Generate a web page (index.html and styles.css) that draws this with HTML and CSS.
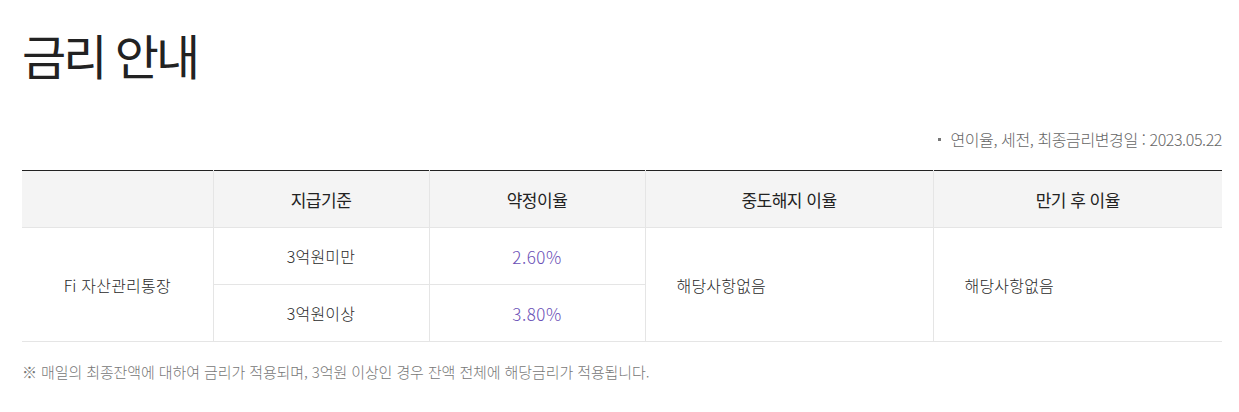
FILE: index.html
```html
<!DOCTYPE html>
<html lang="ko">
<head>
<meta charset="utf-8">
<title>금리 안내</title>
<link rel="stylesheet" href="styles.css">
</head>
<body>
<div class="wrap">
  <h1 class="title">금리 안내</h1>
  <p class="info"><span class="dot"></span>연이율, 세전, 최종금리변경일 : 2023.05.22</p>
  <table class="rate">
    <colgroup>
      <col class="c1"><col class="c2"><col class="c3"><col class="c4"><col class="c5">
    </colgroup>
    <thead>
      <tr>
        <th></th>
        <th>지급기준</th>
        <th>약정이율</th>
        <th>중도해지 이율</th>
        <th>만기 후 이율</th>
      </tr>
    </thead>
    <tbody>
      <tr>
        <td rowspan="2">Fi 자산관리통장</td>
        <td>3억원미만</td>
        <td class="pct">2.60%</td>
        <td rowspan="2" class="left">해당사항없음</td>
        <td rowspan="2" class="left">해당사항없음</td>
      </tr>
      <tr>
        <td>3억원이상</td>
        <td class="pct">3.80%</td>
      </tr>
    </tbody>
  </table>
  <p class="note">※ 매일의 최종잔액에 대하여 금리가 적용되며, 3억원 이상인 경우 잔액 전체에 해당금리가 적용됩니다.</p>
</div>
</body>
</html>
```

FILE: styles.css
```css
html, body {
  margin: 0;
  padding: 0;
  background: #fff;
}
body {
  font-family: "Noto Sans CJK KR", "Noto Sans", sans-serif;
  color: #333;
}
.wrap {
  width: 1200px;
  padding: 0 0 0 22px;
}
.title {
  margin: 0;
  padding-top: 19px;
  font-size: 48px;
  font-weight: 400;
  line-height: 70px;
  letter-spacing: -3px;
  color: #222;
}
.info {
  margin: 40px 0 0;
  text-align: right;
  font-size: 16px;
  font-weight: 300;
  line-height: 20px;
  letter-spacing: -0.4px;
  color: #666;
}
.dot {
  display: inline-block;
  width: 3px;
  height: 3px;
  background: #777;
  vertical-align: middle;
  margin-right: 9px;
  position: relative;
  top: -2px;
}
.rate {
  margin-top: 21px;
  width: 1200px;
  border-collapse: collapse;
  table-layout: fixed;
  border-top: 1px solid #222;
}
.c1 { width: 191px; }
.c2 { width: 216px; }
.c3 { width: 216px; }
.c4 { width: 288px; }
.c5 { width: 289px; }
.rate th, .rate td {
  border: 1px solid #e5e5e5;
  text-align: center;
  font-size: 16px;
  font-weight: 300;
  letter-spacing: 0.2px;
  height: 56px;
  padding: 0;
}
.rate tr > :first-child { border-left: 0; }
.rate tr > :last-child { border-right: 0; }
.rate thead th {
  background: #f4f4f4;
  color: #222;
  border-top: 0;
  font-size: 17px;
  font-weight: 400;
  letter-spacing: -0.5px;
}
.rate td { color: #2a2a2a; }
.rate td.pct { color: #6a4fb6; font-size: 17px; letter-spacing: 0.5px; }
.rate td.left { text-align: left; padding-left: 31px; }
.note {
  margin: 20px 0 0;
  font-size: 15px;
  font-weight: 300;
  line-height: 20px;
  letter-spacing: -0.1px;
  color: #777;
}
```
